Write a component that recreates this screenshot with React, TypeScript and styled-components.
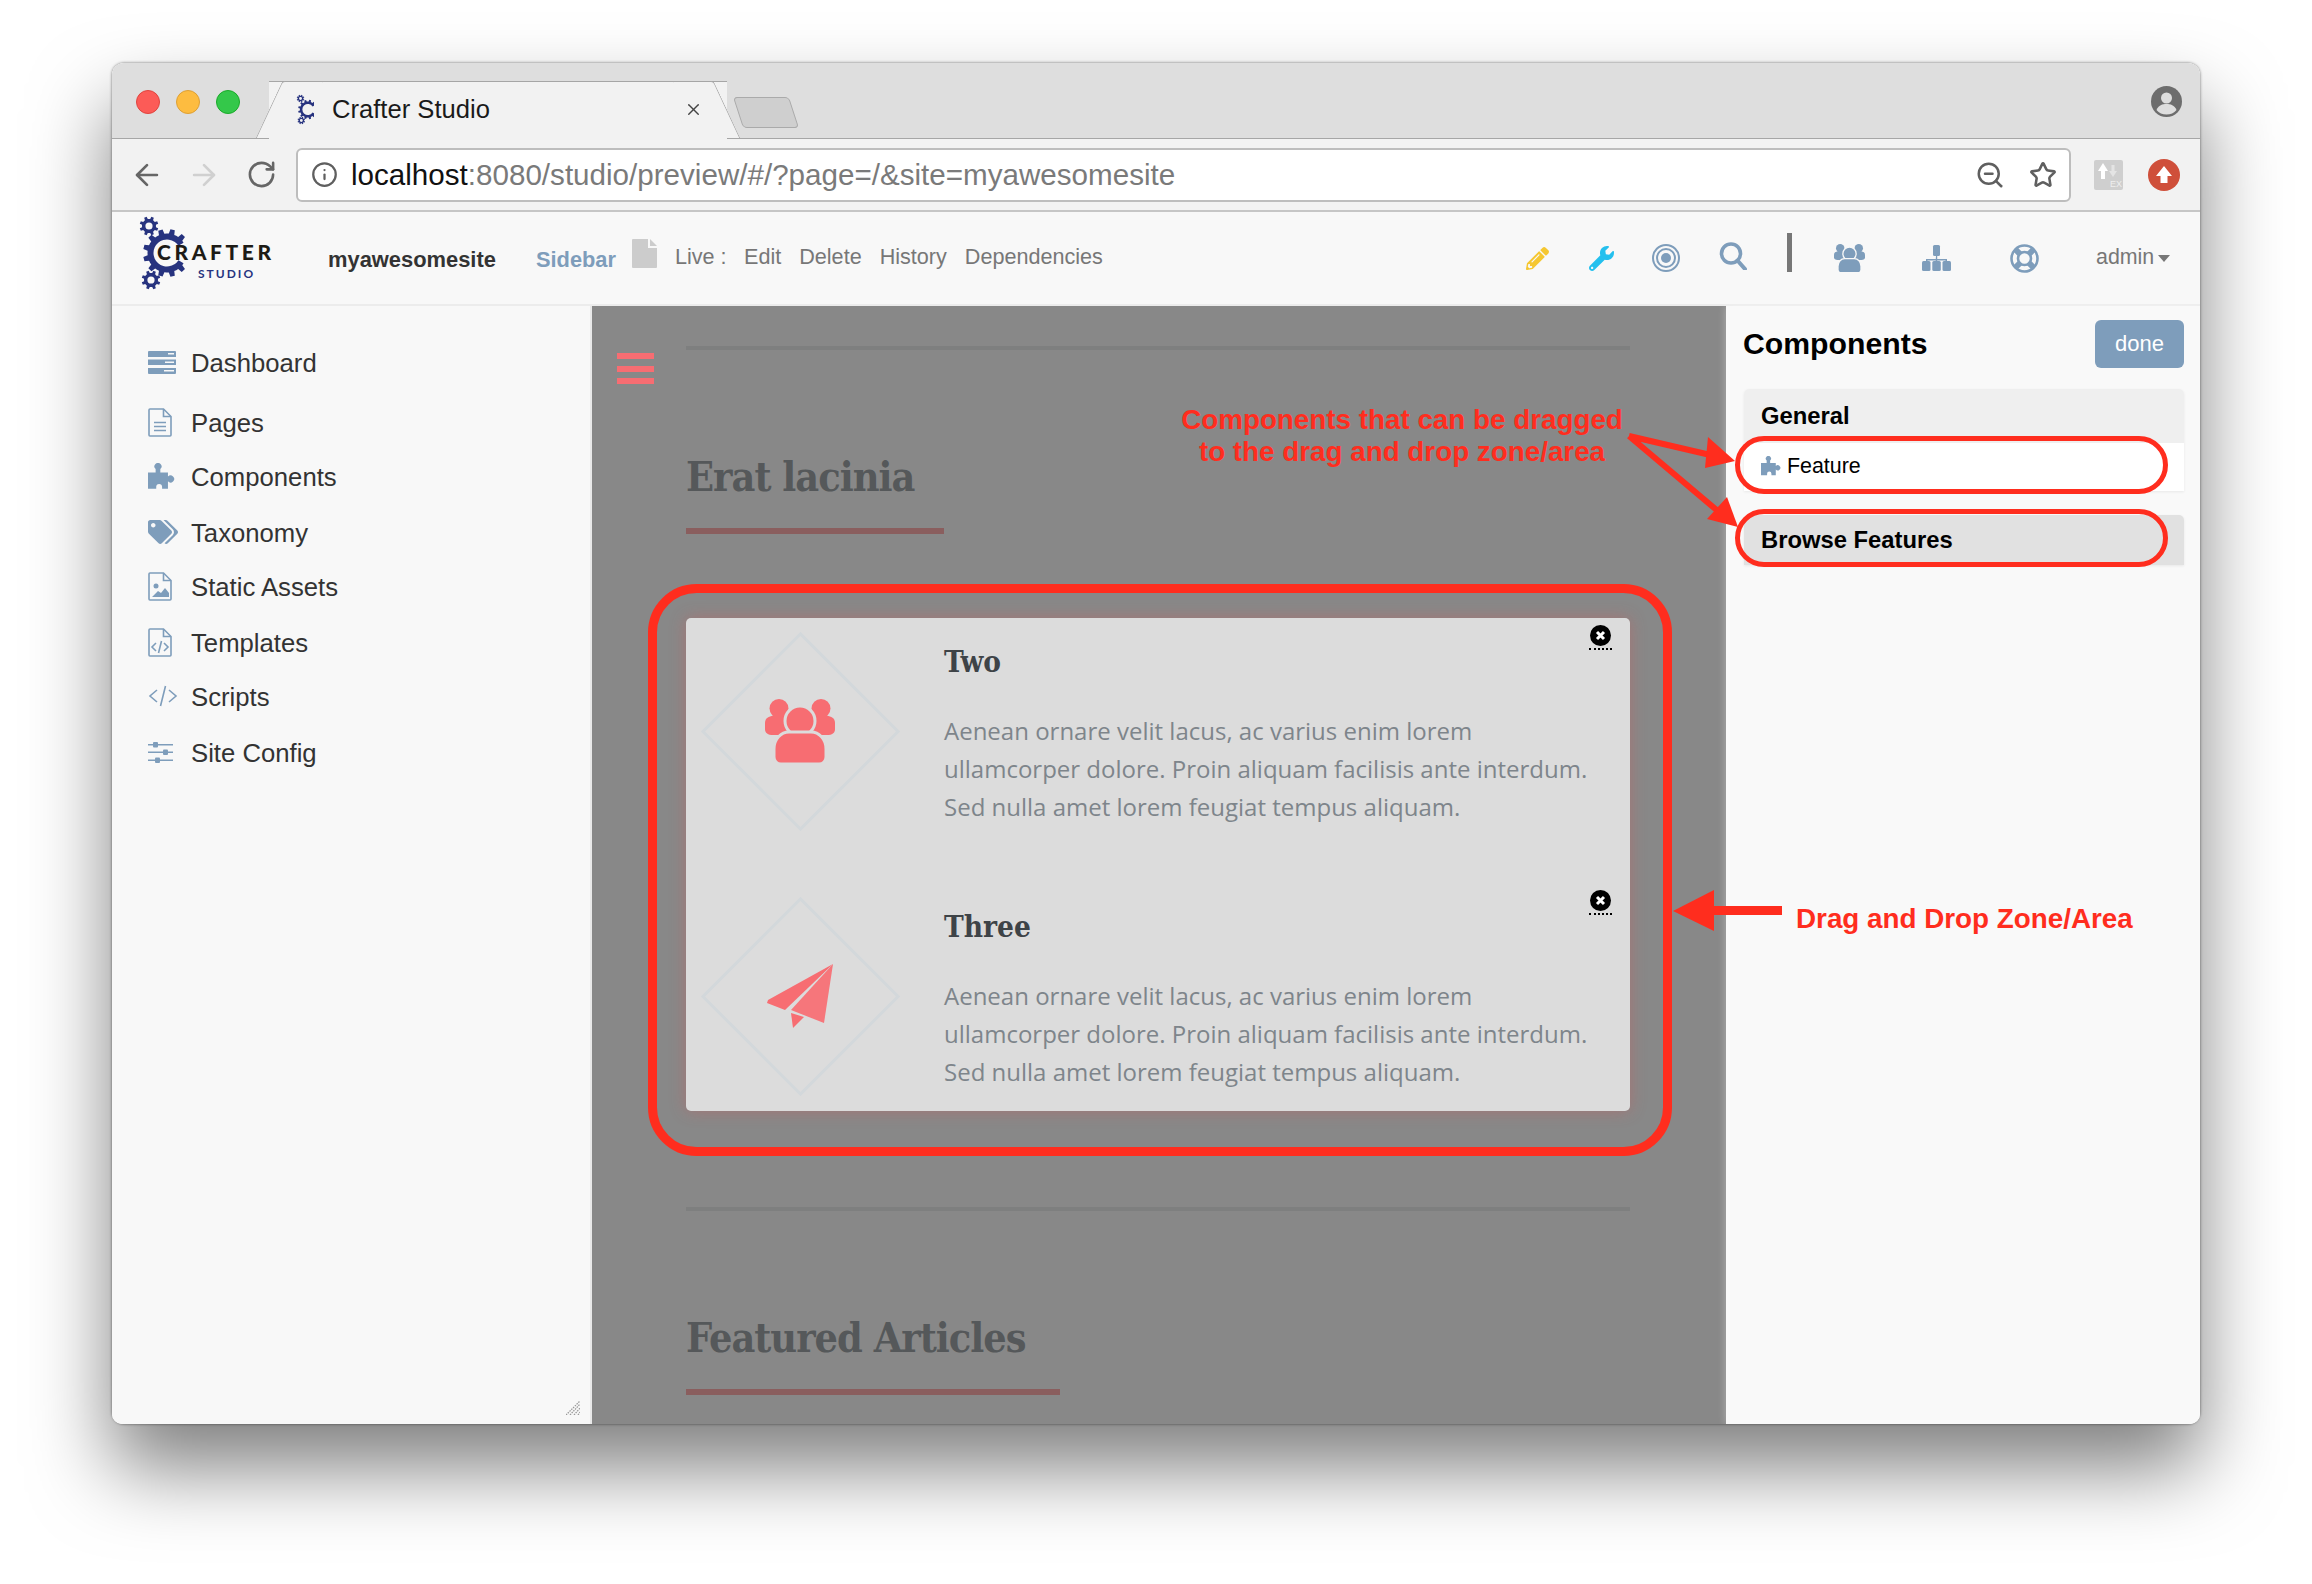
import React from 'react';
import styled, { createGlobalStyle } from 'styled-components';
import { ArrowLeft, ArrowRight, RotateCw, Info, ZoomOut, Star, X } from 'lucide-react';
import { FaPencilAlt, FaWrench, FaTags } from 'react-icons/fa';

const Global = createGlobalStyle`
  html, body { margin: 0; padding: 0; background: #fff; }
  body { font-family: "Liberation Sans", Arial, sans-serif; }
  * { box-sizing: border-box; }
`;

const BLUE = '#7e9dbb';
const RED = '#ff2d1e';

const Page = styled.div`
  position: relative;
  width: 2312px;
  height: 1584px;
  padding: 63px 112px 160px;
  overflow: hidden;
  background: #fff;
`;
const Win = styled.div`
  height: 1361px;
  display: flex;
  flex-direction: column;
  border-radius: 12px 12px 10px 10px;
  overflow: hidden;
  background: #f8f8f8;
`;
const WinShadow = styled.div`
  height: 1361px;
  border-radius: 12px;
  box-shadow: 0 44px 80px rgba(0, 0, 0, 0.5), 0 0 3px rgba(0, 0, 0, 0.55);
`;
const TabStrip = styled.div`
  height: 76px;
  flex: none;
  display: flex;
  align-items: flex-start;
  background: #dedede;
  border-bottom: 1px solid #a6a6a6;
`;
const Lights = styled.div`
  display: flex;
  gap: 16px;
  margin: 27px 0 0 24px;
`;
const Light = styled.span<{ $c: string; $b: string }>`
  width: 24px;
  height: 24px;
  border-radius: 50%;
  background: ${(p) => p.$c};
  border: 1px solid ${(p) => p.$b};
`;
const Tab = styled.div`
  position: relative;
  width: 458px;
  height: 58px;
  margin: 18px 0 0 29px;
  padding: 0 0 2px 27px;
  display: flex;
  align-items: center;
  background: #f2f2f2;
  border-top: 1px solid #a6a6a6;
  z-index: 1;
  &::before, &::after {
    content: '';
    position: absolute;
    top: -1px;
    bottom: 1px;
    width: 40px;
    background: #f2f2f2;
    border-top: 1px solid #a6a6a6;
    z-index: -1;
  }
  &::before {
    left: 0;
    transform: skewX(-25deg);
    border-left: 1px solid #a6a6a6;
    border-radius: 3px 0 0 0;
  }
  &::after {
    right: 0;
    transform: skewX(25deg);
    border-right: 1px solid #a6a6a6;
    border-radius: 0 3px 0 0;
  }
`;
const TabTitle = styled.span`
  margin-left: 18px;
  font-size: 25.6px;
  color: #1a1a1a;
  width: 352px;
`;
const TabClose = styled.span`
  display: flex;
  color: #444;
`;
const NewTab = styled.div`
  width: 56px;
  height: 31px;
  margin: 34px 0 0 11px;
  background: #cfcfcf;
  border: 1px solid #aaa;
  border-radius: 4px;
  transform: skewX(18deg);
`;
const Profile = styled.div`
  margin: 23px 18px 0 auto;
  display: flex;
`;
const Toolbar = styled.div`
  height: 73px;
  flex: none;
  display: flex;
  align-items: center;
  padding-left: 23px;
  background: #f2f2f2;
  border-bottom: 2px solid #c6c6c6;
`;
const NavBtn = styled.span<{ $c: string }>`
  width: 24px;
  margin-right: 33px;
  display: flex;
  justify-content: center;
  color: ${(p) => p.$c};
  svg { flex: none; }
  &:nth-child(3) { margin-right: 23px; }
`;
const Address = styled.div`
  width: 1775px;
  height: 54px;
  display: flex;
  align-items: center;
  padding: 0 12px 0 13px;
  background: #fff;
  border: 2px solid #bdbdbd;
  border-radius: 6px;
  color: #5f5f5f;
`;
const Url = styled.span`
  margin-left: 13px;
  font-size: 29.6px;
  color: #7a7a7a;
  flex: 1;
  b { font-weight: 400; color: #111; }
`;
const AddrIcons = styled.span`
  display: flex;
  gap: 24px;
  align-items: center;
`;
const ExtSlot = styled.span`
  display: flex;
  margin-left: 23px;
`;
const RedSlot = styled.span`
  display: flex;
  margin-left: 25px;
`;
const Header = styled.header`
  height: 94px;
  flex: none;
  display: flex;
  background: #f8f8f8;
  border-bottom: 2px solid #ececec;
  padding-left: 23px;
`;
const LogoBox = styled.div`
  width: 193px;
  padding-top: 4px;
  display: flex;
  align-items: flex-start;
`;
const SiteName = styled.div`
  font-size: 21.9px;
  font-weight: 700;
  line-height: 30px;
  color: #333;
  padding-top: 33px;
  width: 208px;
`;
const SidebarLink = styled.div`
  font-size: 21.8px;
  font-weight: 700;
  line-height: 30px;
  color: ${BLUE};
  padding-top: 33px;
  width: 96px;
`;
const FileSlot = styled.div`
  width: 43px;
  padding-top: 27px;
  display: flex;
  align-items: flex-start;
  color: #ccc;
`;
const Links = styled.div`
  display: flex;
  gap: 18px;
  font-size: 21.6px;
  line-height: 30px;
  color: #777;
  padding-top: 30px;
  white-space: nowrap;
`;
const Live = styled.span`
  width: 51px;
`;
const Tools = styled.div`
  margin-left: auto;
  display: flex;
  align-items: stretch;
  height: 92px;
`;
const ToolSlot = styled.span<{ $w: number; $c?: string; $up?: number }>`
  width: ${(p) => p.$w}px;
  padding-bottom: ${(p) => p.$up || 0}px;
  display: flex;
  align-items: center;
  justify-content: center;
  color: ${(p) => p.$c || BLUE};
`;
const Sep = styled.span`
  width: 5px;
  height: 39px;
  margin-top: -12px;
  background: #777;
`;
const Admin = styled.span`
  margin-left: 32px;
  width: 104px;
  padding-top: 30px;
  font-size: 21.4px;
  line-height: 30px;
  color: #777;
  display: flex;
  align-items: flex-start;
`;
const Caret = styled.span`
  margin: 13px 0 0 4px;
  border-left: 6px solid transparent;
  border-right: 6px solid transparent;
  border-top: 7px solid #777;
`;
const Body = styled.div`
  flex: 1;
  min-height: 0;
  display: flex;
`;
const Sidebar = styled.nav`
  position: relative;
  width: 480px;
  flex: none;
  padding: 42px 0 0 36px;
  background: #f8f8f8;
  border-right: 2px solid #e9e9e9;
`;
const Row = styled.div<{ $h: number }>`
  height: ${(p) => p.$h}px;
  display: flex;
  align-items: flex-start;
  font-size: 25.7px;
  line-height: 30px;
  color: #333;
`;
const RowIcon = styled.span`
  width: 43px;
  height: 28px;
  flex: none;
  display: flex;
  align-items: center;
  color: ${BLUE};
`;
const Grip = styled.span`
  position: absolute;
  right: 10px;
  bottom: 9px;
  display: flex;
`;
const Main = styled.main`
  width: 1134px;
  flex: none;
  display: flex;
  background: #888;
  overflow: hidden;
`;
const Burger = styled.div`
  width: 94px;
  flex: none;
  padding: 47px 0 0 25px;
  display: flex;
  flex-direction: column;
  gap: 6.5px;
`;
const BurgerBar = styled.span`
  width: 37px;
  height: 6px;
  background: #f76d72;
`;
const Content = styled.div`
  width: 944px;
  flex: none;
  padding-top: 40px;
`;
const Rule = styled.div`
  height: 4px;
  background: #7e7f7f;
`;
const Heading = styled.h2`
  margin: 102px 0 0;
  font-family: "DejaVu Serif Condensed", "Liberation Serif", serif;
  font-size: 41px;
  font-weight: 700;
  letter-spacing: -1px;
  line-height: 50px;
  color: #55585a;
`;
const HeadBar = styled.div<{ $w: number }>`
  width: ${(p) => p.$w}px;
  height: 6px;
  margin-top: 26px;
  background: #8a5e5e;
`;
const Card = styled.section`
  margin: 84px 0 96px;
  padding: 15px 0 17px;
  display: flex;
  flex-direction: column;
  gap: 69px;
  background: #dcdcdc;
  border-radius: 5px;
  box-shadow: 0 0 16px rgba(215, 85, 85, 0.4);
`;
const Item = styled.article`
  position: relative;
  height: 196px;
  display: flex;
`;
const IconCol = styled.div`
  width: 258px;
  flex: none;
  padding-left: 16px;
`;
const DiamondBox = styled.div`
  width: 196px;
  height: 196px;
  display: grid;
  place-items: center;
  & > * { grid-area: 1 / 1; }
`;
const Diamond = styled.div`
  width: 141px;
  height: 141px;
  border: 3px solid #d3d8db;
  transform: rotate(45deg);
`;
const FeatureIcon = styled.span`
  display: flex;
  color: #f76d72;
`;
const TextCol = styled.div`
  flex: 1;
`;
const ItemTitle = styled.h3`
  margin: 9px 0 0;
  font-family: "DejaVu Serif Condensed", "Liberation Serif", serif;
  font-size: 29.5px;
  font-weight: 700;
  line-height: 40px;
  color: #3e4347;
`;
const ItemText = styled.p`
  margin: 30px 0 0;
  font-family: "Open Sans", sans-serif;
  font-size: 24px;
  line-height: 38px;
  color: #7e858b;
  white-space: nowrap;
`;
const Close = styled.span`
  position: absolute;
  top: -8px;
  right: 18px;
  width: 23px;
  padding: 0 1px 2px;
  display: flex;
  border-bottom: 2px dotted #000;
`;
const Panel = styled.aside`
  flex: 1;
  padding: 14px 20px 0 17px;
  background: #f9f9f9;
  box-shadow: 0 0 8px rgba(255, 255, 255, 0.35);
`;
const PanelHead = styled.div`
  display: flex;
  justify-content: space-between;
  align-items: flex-start;
`;
const PanelTitle = styled.h2`
  margin: 2px 0 0;
  font-size: 30.2px;
  font-weight: 700;
  line-height: 44px;
  color: #000;
`;
const Done = styled.button`
  width: 89px;
  height: 48px;
  padding: 0;
  border: 0;
  border-radius: 6px;
  background: ${BLUE};
  color: #fff;
  font: 400 22px "Liberation Sans", Arial, sans-serif;
`;
const Group = styled.div`
  width: 440px;
  margin: 0 0 24px 1px;
  box-shadow: 0 1px 3px rgba(0, 0, 0, 0.07);
  border-radius: 5px 5px 0 0;
`;
const GroupHead = styled.div<{ $h: number; $bg: string }>`
  height: ${(p) => p.$h}px;
  padding: 0 17px;
  display: flex;
  align-items: center;
  background: ${(p) => p.$bg};
  font-size: 23.8px;
  font-weight: 700;
  color: #000;
  border-radius: 5px 5px 0 0;
`;
const GroupRow = styled.div`
  height: 48px;
  padding: 0 17px 2px;
  display: flex;
  align-items: center;
  gap: 6px;
  background: #fff;
  font-size: 21.4px;
  color: #000;
  svg { color: ${BLUE}; }
`;
const Accordion = styled.div`
  margin-top: 21px;
`;
const Overlay = styled.svg`
  position: absolute;
  inset: 0;
  pointer-events: none;
`;
const Note = styled.div<{ $x: number; $y: number; $w: number; $align?: string }>`
  position: absolute;
  left: ${(p) => p.$x}px;
  top: ${(p) => p.$y}px;
  width: ${(p) => p.$w}px;
  text-align: ${(p) => p.$align || 'left'};
  font-size: 27.8px;
  font-weight: 700;
  line-height: 32px;
  color: ${RED};
  white-space: nowrap;
`;

function gear(cx: number, cy: number, R: number, r: number, hole: number, teeth: number, a0 = 0, a1 = 360) {
  const step = (a1 - a0) / teeth;
  const pt = (a: number, rad: number) => {
    const t = (a * Math.PI) / 180;
    return `${(cx + rad * Math.cos(t)).toFixed(2)} ${(cy + rad * Math.sin(t)).toFixed(2)}`;
  };
  const pts: string[] = [];
  for (let i = 0; i < teeth; i++) {
    const a = a0 + i * step;
    pts.push(pt(a, r), pt(a + step * 0.22, r), pt(a + step * 0.32, R), pt(a + step * 0.68, R), pt(a + step * 0.78, r));
  }
  pts.push(pt(a1, r));
  const full = a1 - a0 >= 360;
  let d = `M${pts.join('L')}`;
  if (full) {
    d += `Z M${cx - hole} ${cy}a${hole} ${hole} 0 1 0 ${hole * 2} 0a${hole} ${hole} 0 1 0 ${-hole * 2} 0Z`;
  } else {
    d += `L${pt(a1, hole)}A${hole} ${hole} 0 1 0 ${pt(a0, hole)}Z`;
  }
  return d;
}

const Gears = () => (
  <g fill="#27337f" fillRule="evenodd">
    <path d={gear(149, 226, 9.5, 7, 3.6, 8)} />
    <path d={gear(151, 280, 9.5, 7, 3.6, 8)} />
    <path d={gear(167, 253, 24, 19.5, 13.5, 10, 32, 328)} />
  </g>
);

const Logo = () => (
  <svg width="145" height="76" viewBox="135 216 145 76">
    <Gears />
    <text x="157" y="260" fontFamily="Lato, sans-serif" fontWeight="900" fontSize="21" letterSpacing="3.6" fill="#1d1b16">CRAFTER</text>
    <text x="198" y="277.5" fontFamily="Lato, sans-serif" fontWeight="700" fontSize="12" letterSpacing="2" fill="#27337f">STUDIO</text>
  </svg>
);

const Favicon = () => (
  <svg width="18" height="31" viewBox="138 215 44 76">
    <Gears />
  </svg>
);

const Puzzle = ({ w }: { w: number }) => (
  <svg width={w} viewBox="0 0 23 22" fill="currentColor">
    <path d="M0 8h6.5V5.2a3 3 0 1 1 4 0V8H17v3.6a3 3 0 1 1 0 4V22h-5v-1.7a2.5 2.5 0 0 0-5 0V22H0z" />
  </svg>
);

const Group3 = ({ w, gap }: { w: number; gap: string }) => (
  <svg width={w} viewBox="0 0 70 65" fill="currentColor">
    <circle cx="14" cy="9.5" r="9.5" />
    <circle cx="56" cy="9.5" r="9.5" />
    <path d="M0 24c0-5 4-7 8-7h12c5 0 8 3 8 8v11H8c-5 0-8-2-8-6z" />
    <path d="M70 24c0-5-4-7-8-7H50c-5 0-8 3-8 8v11h20c5 0 8-2 8-6z" />
    <circle cx="35" cy="22" r="15" stroke={gap} strokeWidth="3" />
    <path d="M9 50c0-10 7-17 15-17h22c8 0 15 7 15 17v8c0 4-3 7-7 7H16c-4 0-7-3-7-7z" stroke={gap} strokeWidth="3" />
  </svg>
);

const Plane = () => (
  <svg width="66" height="64" viewBox="0 0 66 64" fill="currentColor">
    <path d="M66 0 1 36l-1 3 18 7z" />
    <path d="M66 0 24 46l33 13z" opacity=".92" />
    <path d="M24 49l2 15 11-11z" />
  </svg>
);

const Target = () => (
  <svg width="28" height="28" viewBox="0 0 28 28" fill="none" stroke="currentColor">
    <circle cx="14" cy="14" r="13" strokeWidth="2" />
    <circle cx="14" cy="14" r="9" strokeWidth="2" />
    <circle cx="14" cy="14" r="5" fill="currentColor" strokeWidth="0" />
  </svg>
);

const Search = () => (
  <svg width="28" height="28" viewBox="0 0 28 28" fill="none" stroke="currentColor">
    <circle cx="12" cy="11.500" r="9.500" strokeWidth="3.600" />
    <path d="M18.500 18.500 26 27" strokeWidth="4" strokeLinecap="round" />
  </svg>
);

const Sitemap = () => (
  <svg width="29" height="26" viewBox="0 0 29 26" fill="currentColor">
    <rect x="11" y="0" width="7" height="11" rx="1.500" />
    <path d="M14 11h1.200v3H25v3h-1.500v-1.600H15.200V17h-1.500v-1.600H5.500V17H4v-3h9.800z" />
    <rect x="0" y="16" width="8.500" height="10" rx="1.500" />
    <rect x="10.300" y="16" width="8.500" height="10" rx="1.500" />
    <rect x="20.500" y="16" width="8.500" height="10" rx="1.500" />
  </svg>
);

const Ring = () => (
  <svg width="29" height="29" viewBox="0 0 29 29" fill="none" stroke="currentColor">
    <circle cx="14.500" cy="14.500" r="13" strokeWidth="2.600" />
    <circle cx="14.500" cy="14.500" r="6.500" strokeWidth="2.600" />
    <path d="M5.500 5.500l5 5M23.500 5.500l-5 5M5.500 23.500l5-5M23.500 23.500l-5-5" strokeWidth="6" />
  </svg>
);

const FileOutline = ({ children }: { children?: React.ReactNode }) => (
  <svg width="24" height="29" viewBox="0 0 24 29" fill="none" stroke="currentColor" strokeWidth="1.6">
    <path d="M1 2a1 1 0 0 1 1-1h13.5L23 8.500V27a1 1 0 0 1-1 1H2a1 1 0 0 1-1-1z" />
    <path d="M15.500 1v7.500H23" />
    {children}
  </svg>
);

const icons: React.ReactNode[] = [
  <svg key="d" width="28" height="23" viewBox="0 0 28 23" fill="currentColor">
    <path d="M0 1a1 1 0 0 1 1-1h26a1 1 0 0 1 1 1v5H0zM0 8.500h28V14H0zM0 17h28v5a1 1 0 0 1-1 1H1a1 1 0 0 1-1-1z" />
    <path d="M20 2h6v1.500h-6zM17 10.500h9V12h-9zM16 19h10v1.500H16z" fill="#f8f8f8" />
  </svg>,
  <FileOutline key="p">
    <path d="M6 14.500h12M6 18.500h12M6 22.500h12" />
  </FileOutline>,
  <Puzzle key="c" w={27} />,
  <FaTags key="t" size={30} />,
  <FileOutline key="s">
    <circle cx="8" cy="14" r="2.500" fill="currentColor" stroke="none" />
    <path d="M4 25l6-6 3 2 4-5 4 5v4z" fill="currentColor" stroke="none" />
  </FileOutline>,
  <FileOutline key="tp">
    <path d="M8 15l-4 4 4 4M16 15l4 4-4 4M13.500 13l-3 12" />
  </FileOutline>,
  <svg key="sc" width="30" height="22" viewBox="0 0 30 22" fill="none" stroke="currentColor" strokeWidth="1.600">
    <path d="M9 5l-7 6 7 6M21 5l7 6-7 6M17.500 1l-5 20" />
  </svg>,
  <svg key="sf" width="25" height="21" viewBox="0 0 25 21" fill="currentColor">
    <path d="M0 2h25v1.500H0zM0 9.500h25V11H0zM0 17.500h25V19H0z" />
    <rect x="5" y="0" width="5" height="5.500" rx="1" />
    <rect x="15" y="7.500" width="5" height="5.500" rx="1" />
    <rect x="7" y="15.500" width="5" height="5.500" rx="1" />
  </svg>,
];

const nav: [string, number][] = [
  ['Dashboard', 60],
  ['Pages', 54],
  ['Components', 56],
  ['Taxonomy', 54],
  ['Static Assets', 56],
  ['Templates', 54],
  ['Scripts', 56],
  ['Site Config', 54],
];

const text = [
  'Aenean ornare velit lacus, ac varius enim lorem',
  'ullamcorper dolore. Proin aliquam facilisis ante interdum.',
  'Sed nulla amet lorem feugiat tempus aliquam.',
];

const CloseBtn = () => (
  <Close>
    <svg width="21" height="21" viewBox="0 0 21 21">
      <circle cx="10.500" cy="10.500" r="10.500" fill="#000" />
      <path d="M7 7l7 7M14 7l-7 7" stroke="#fff" strokeWidth="3" />
    </svg>
  </Close>
);

const Feature = ({ title, icon }: { title: string; icon: React.ReactNode }) => (
  <Item>
    <IconCol>
      <DiamondBox>
        <Diamond />
        <FeatureIcon>{icon}</FeatureIcon>
      </DiamondBox>
    </IconCol>
    <TextCol>
      <ItemTitle>{title}</ItemTitle>
      <ItemText>
        {text[0]}
        <br />
        {text[1]}
        <br />
        {text[2]}
      </ItemText>
    </TextCol>
    <CloseBtn />
  </Item>
);

export default function App() {
  return (
    <Page>
      <Global />
      <WinShadow>
        <Win>
          <TabStrip>
            <Lights>
              <Light $c="#fc5b57" $b="#e0443e" />
              <Light $c="#fdbc40" $b="#dea034" />
              <Light $c="#34c84a" $b="#1aab29" />
            </Lights>
            <Tab>
              <Favicon />
              <TabTitle>Crafter Studio</TabTitle>
              <TabClose>
                <X size={19} strokeWidth={1.8} />
              </TabClose>
            </Tab>
            <NewTab />
            <Profile>
              <svg width="31" height="31" viewBox="0 0 31 31">
                <circle cx="15.500" cy="15.500" r="15.500" fill="#6d6d6d" />
                <circle cx="15.500" cy="12" r="5.500" fill="#dedede" />
                <path d="M5.500 24c2-5 6-6 10-6s8 1 10 6c-2.500 3-6 4.500-10 4.500S8 27 5.500 24z" fill="#dedede" />
              </svg>
            </Profile>
          </TabStrip>
          <Toolbar>
            <NavBtn $c="#666">
              <ArrowLeft size={34} strokeWidth={1.9} />
            </NavBtn>
            <NavBtn $c="#d0d0d0">
              <ArrowRight size={34} strokeWidth={1.9} />
            </NavBtn>
            <NavBtn $c="#666">
              <RotateCw size={31} strokeWidth={2} />
            </NavBtn>
            <Address>
              <Info size={27} strokeWidth={2} />
              <Url>
                <b>localhost</b>:8080/studio/preview/#/?page=/&amp;site=myawesomesite
              </Url>
              <AddrIcons>
                <ZoomOut size={30} strokeWidth={2} />
                <Star size={28} strokeWidth={2.2} />
              </AddrIcons>
            </Address>
            <ExtSlot>
              <svg width="29" height="30" viewBox="0 0 29 30">
                <rect width="29" height="30" rx="2" fill="#cfcfcf" />
                <path d="M9 3l5 8h-3v8H7v-8H4z" fill="#fff" />
                <path d="M19 17l4-6h-2.500V5h-3v6H15z" fill="#e4e4e4" />
                <text x="16" y="27" fontSize="9" fill="#eee" fontFamily="Liberation Sans, sans-serif">EX</text>
              </svg>
            </ExtSlot>
            <RedSlot>
              <svg width="32" height="32" viewBox="0 0 32 32">
                <circle cx="16" cy="16" r="16" fill="#cf4f3a" />
                <path d="M16 7l8 10h-4.500v7h-7v-7H8z" fill="#fff" />
              </svg>
            </RedSlot>
          </Toolbar>
          <Header>
            <LogoBox>
              <Logo />
            </LogoBox>
            <SiteName>myawesomesite</SiteName>
            <SidebarLink>Sidebar</SidebarLink>
            <FileSlot>
              <svg width="25" height="29" viewBox="0 0 25 29" fill="currentColor">
                <path d="M0 1a1 1 0 0 1 1-1h15v9h9v19a1 1 0 0 1-1 1H1a1 1 0 0 1-1-1z" />
                <path d="M18 0l7 7h-7z" />
              </svg>
            </FileSlot>
            <Links>
              <Live>Live :</Live>
              <span>Edit</span>
              <span>Delete</span>
              <span>History</span>
              <span>Dependencies</span>
            </Links>
            <Tools>
              <ToolSlot $w={64} $c="#f5c731">
                <FaPencilAlt size={23} />
              </ToolSlot>
              <ToolSlot $w={64} $c="#25c0ee">
                <FaWrench size={25} />
              </ToolSlot>
              <ToolSlot $w={65}>
                <Target />
              </ToolSlot>
              <ToolSlot $w={70} $up={5}>
                <Search />
              </ToolSlot>
              <ToolSlot $w={42}>
                <Sep />
              </ToolSlot>
              <ToolSlot $w={78}>
                <Group3 w={31} gap="#f8f8f8" />
              </ToolSlot>
              <ToolSlot $w={96}>
                <Sitemap />
              </ToolSlot>
              <ToolSlot $w={80}>
                <Ring />
              </ToolSlot>
              <Admin>
                admin
                <Caret />
              </Admin>
            </Tools>
          </Header>
          <Body>
            <Sidebar>
              {nav.map(([label, h], i) => (
                <Row key={label} $h={h}>
                  <RowIcon>{icons[i]}</RowIcon>
                  {label}
                </Row>
              ))}
              <Grip>
                <svg width="14" height="14" viewBox="0 0 14 14" stroke="#999" strokeWidth="1.300" strokeDasharray="1.500 1">
                  <path d="M0 14L14 0M4 14L14 3M8 14l6-7M12 14l2-3" />
                </svg>
              </Grip>
            </Sidebar>
            <Main>
              <Burger>
                <BurgerBar />
                <BurgerBar />
                <BurgerBar />
              </Burger>
              <Content>
                <Rule />
                <Heading>Erat lacinia</Heading>
                <HeadBar $w={258} />
                <Card>
                  <Feature title="Two" icon={<Group3 w={70} gap="#dcdcdc" />} />
                  <Feature title="Three" icon={<Plane />} />
                </Card>
                <Rule />
                <Heading>Featured Articles</Heading>
                <HeadBar $w={374} />
              </Content>
            </Main>
            <Panel>
              <PanelHead>
                <PanelTitle>Components</PanelTitle>
                <Done>done</Done>
              </PanelHead>
              <Accordion>
                <Group>
                  <GroupHead $h={54} $bg="#efefef">General</GroupHead>
                  <GroupRow>
                    <Puzzle w={20} />
                    Feature
                  </GroupRow>
                </Group>
                <Group>
                  <GroupHead $h={50} $bg="#e1e1e1">Browse Features</GroupHead>
                </Group>
              </Accordion>
            </Panel>
          </Body>
        </Win>
      </WinShadow>
      <Overlay width="2312" height="1584" viewBox="0 0 2312 1584">
        <rect x="652.500" y="588.500" width="1015" height="563" rx="44" fill="none" stroke={RED} strokeWidth="9" />
        <rect x="1737.500" y="438.500" width="428" height="53" rx="26.500" fill="none" stroke={RED} strokeWidth="5" />
        <rect x="1737.500" y="511.500" width="428" height="53" rx="26.500" fill="none" stroke={RED} strokeWidth="5" />
        <path d="M1629 436l90 21M1629 436l90 76" stroke={RED} strokeWidth="6" fill="none" />
        <polygon points="1735,461 1708,437 1705,468" fill={RED} />
        <polygon points="1738,527 1727,497 1707,519" fill={RED} />
        <polygon points="1673,911 1714,890 1714,931" fill={RED} />
        <rect x="1710" y="906" width="72" height="9" fill={RED} />
      </Overlay>
      <Note $x={1102} $y={404} $w={600} $align="center">
        Components that can be dragged
        <br />
        to the drag and drop zone/area
      </Note>
      <Note $x={1796} $y={903} $w={340}>Drag and Drop Zone/Area</Note>
    </Page>
  );
}
